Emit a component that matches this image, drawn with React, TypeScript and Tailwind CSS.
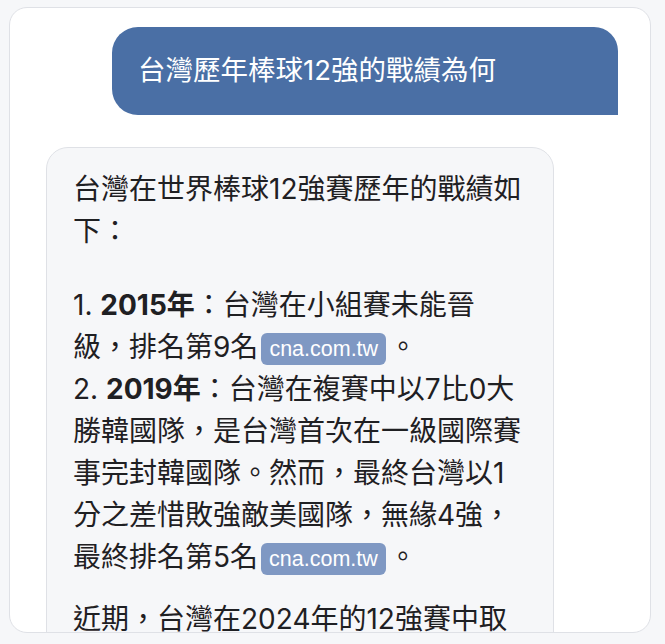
import React from "react";

const cjk = { fontFamily: 'Inter, "Noto Sans CJK TC", "Noto Sans", sans-serif' };

function Source({ label }: { label: string }) {
  return (
    <span className="mx-[3px] inline-block rounded-[6px] bg-[#7f98c3] px-[8px] align-middle font-['Liberation_Sans',Arial,sans-serif] text-[21.5px] leading-[32px] text-white">
      {label}
    </span>
  );
}

export default function App() {
  return (
    <div className="min-h-screen bg-[#f6f7f9] pt-[7px]">
      <div className="ml-[9px] h-[626px] w-[642px] overflow-hidden rounded-[18px] border-[1.5px] border-[#dfe1e6] bg-white" style={cjk}>
        <div className="flex justify-end pr-[32px] pt-[19px]">
          <div className="flex h-[88px] w-[506px] items-center rounded-tl-[26px] rounded-tr-[24px] rounded-bl-[26px] bg-[#4a6fa5] px-[26px] text-[27.5px] text-white">
            台灣歷年棒球12強的戰績為何
          </div>
        </div>

        <div className="ml-[36px] mt-[32px] w-[508px] rounded-[22px] border-[1.5px] border-[#dfe1e6] bg-[#f6f7f9] pl-[26px] pr-[20px] pt-[20px] pb-8 text-[28px] leading-[42px] text-[#1f2023]">
          <p>
            台灣在世界棒球12強賽歷年的戰績如
            <br />
            下：
          </p>
          <div className="mt-8">
            <p>
              1. <b className="font-bold">2015年</b>：台灣在小組賽未能晉
              <br />
              級，排名第9名<Source label="cna.com.tw" />。
            </p>
            <p>
              2. <b className="font-bold">2019年</b>：台灣在複賽中以7比0大
              <br />
              勝韓國隊，是台灣首次在一級國際賽
              <br />
              事完封韓國隊。然而，最終台灣以1
              <br />
              分之差惜敗強敵美國隊，無緣4強，
              <br />
              最終排名第5名<Source label="cna.com.tw" />。
            </p>
          </div>
          <p className="mt-5">
            近期，台灣在2024年的12強賽中取
            <br />
            得冠軍，這是台灣首次在一級國際賽
          </p>
        </div>
      </div>
    </div>
  );
}
